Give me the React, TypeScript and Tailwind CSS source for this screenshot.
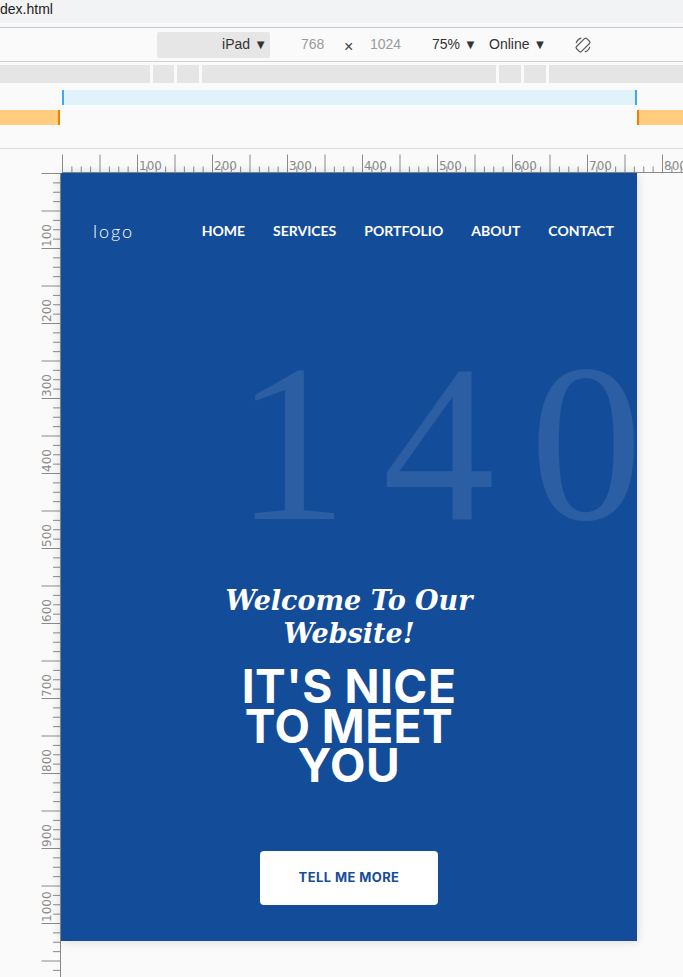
import React from 'react'

const navItems = ['Home', 'Services', 'Portfolio', 'About', 'Contact']

const TICK = 9.375

const HorizontalRuler: React.FC = () => {
  const ticks = Array.from({ length: 67 }, (_, i) => i)
  return (
    <svg width="683" height="24" className="block">
      <line x1="62" y1="23.5" x2="683" y2="23.5" stroke="#8a8a8a" strokeWidth="1" />
      {ticks.map(i => {
        const x = 62.5 + i * TICK
        const long = i % 4 === 0
        return (
          <g key={i}>
            <line x1={x} y1={long ? 5.5 : 17.5} x2={x} y2="24" stroke="#8a8a8a" strokeWidth="1" />
            {i % 8 === 0 && i > 0 && (
              <text x={x + 1.5} y="21" fontSize="12" fill="#8a8a8a" fontFamily="DejaVu Sans, sans-serif">{(i / 8) * 100}</text>
            )}
          </g>
        )
      })}
    </svg>
  )
}

const VerticalRuler: React.FC = () => {
  const ticks = Array.from({ length: 86 }, (_, i) => i)
  return (
    <svg width="61" height="804" className="block shrink-0">
      <line x1="60.5" y1="0" x2="60.5" y2="804" stroke="#8a8a8a" strokeWidth="1" />
      {ticks.map(i => {
        const y = 0.5 + i * TICK
        const long = i % 4 === 0
        return (
          <g key={i}>
            <line x1={long ? 41.5 : 53} y1={y} x2="61" y2={y} stroke="#8a8a8a" strokeWidth="1" />
            {i % 8 === 0 && i > 0 && (
              <text transform={`translate(51 ${y - 1.5}) rotate(-90)`} fontSize="12" fill="#8a8a8a" fontFamily="DejaVu Sans, sans-serif">{(i / 8) * 100}</text>
            )}
          </g>
        )
      })}
    </svg>
  )
}

const RotateIcon: React.FC = () => (
  <svg width="18" height="18" viewBox="0 0 18 18" fill="none" stroke="#5a5a5a" strokeWidth="1.2">
    <rect x="5.5" y="1.8" width="7" height="14.4" rx="1.6" transform="rotate(45 9 9)" />
    <path d="M2.2 7.2 A7.2 7.2 0 0 1 7.2 2.2" />
    <path d="M15.8 10.8 A7.2 7.2 0 0 1 10.8 15.8" />
  </svg>
)

const App: React.FC = () => {
  return (
    <div className="w-[683px] h-[977px] overflow-hidden bg-[#fafafa] font-['Liberation_Sans',sans-serif] text-[#333]">
      {/* tab strip */}
      <div className="h-[23px] bg-[#f1f3f4] text-[14px] leading-[19px] text-[#222]">dex.html</div>
      <div className="h-[5px] border-b border-[#c8c8c8]" />

      {/* device toolbar */}
      <div className="h-[34px] flex items-center border-b border-[#cfcfcf] text-[14px] whitespace-nowrap">
        <div className="ml-[157px] w-[113px] h-[26px] bg-[#e6e6e6] rounded-[2px] flex items-center justify-end pr-[3px] text-[#333]">
          iPad<span className="ml-[4px] text-[13px]">▼</span>
        </div>
        <span className="ml-[31px] w-[26px] text-[#9a9a9a]">768</span>
        <span className="ml-[17px] w-[10px] text-[#444] text-[16px] mt-[4px]">×</span>
        <span className="ml-[16px] w-[34px] text-[#9a9a9a]">1024</span>
        <span className="ml-[28px] w-[46px] text-[#333]">75%<span className="ml-[4px] text-[13px]">▼</span></span>
        <span className="ml-[11px] w-[60px] text-[#333]">Online<span className="ml-[4px] text-[13px]">▼</span></span>
        <span className="ml-[25px] w-[18px] flex"><RotateIcon /></span>
      </div>

      {/* media query bars */}
      <div className="mt-[3px] h-[18px] flex gap-[3px]">
        <div className="w-[150px] bg-[#e5e5e5]" />
        <div className="w-[21px] bg-[#e5e5e5]" />
        <div className="w-[22px] bg-[#e5e5e5]" />
        <div className="w-[294px] bg-[#e5e5e5]" />
        <div className="w-[22px] bg-[#e5e5e5]" />
        <div className="w-[22px] bg-[#e5e5e5]" />
        <div className="flex-1 bg-[#e5e5e5]" />
      </div>
      <div className="mt-[7px] h-[15px] flex">
        <div className="ml-[62px] w-[575px] bg-[#e0f3fb] border-x-[2px] border-[#42a5f5]" />
      </div>
      <div className="mt-[5px] h-[15px] flex">
        <div className="w-[60px] bg-[#ffcc80] border-r-[2px] border-[#f57c00]" />
        <div className="w-[577px]" />
        <div className="flex-1 bg-[#ffcc80] border-l-[2px] border-[#f57c00]" />
      </div>
      <div className="h-[24px] border-b border-[#dcdcdc]" />

      {/* rulers + device frame */}
      <HorizontalRuler />
      <div className="flex">
        <VerticalRuler />
        <div className="relative w-[576px] h-[768px] shrink-0 bg-[#134c98] overflow-hidden shadow-[0_0_10px_rgba(0,0,0,0.14)] text-white">
          <div aria-hidden className="absolute left-[174px] top-[158px] font-['Liberation_Serif',serif] text-[225px] leading-none tracking-[35px] text-white/10 whitespace-nowrap select-none">
            140
          </div>

          <nav className="relative h-[20px] mt-[48px] flex items-center justify-between pl-[32px] pr-[23px]">
            <span className="font-['Lato',sans-serif] text-[18px] font-light tracking-[2px] leading-[20px]">logo</span>
            <ul className="flex gap-[28px] font-['Lato',sans-serif] text-[14px] font-bold uppercase leading-[20px]">
              {navItems.map(item => (
                <li key={item} className="cursor-pointer">{item}</li>
              ))}
            </ul>
          </nav>

          <div className="relative flex flex-col items-center text-center">
            <h3 className="mt-[343px] font-['DejaVu_Serif',serif] italic font-bold text-[27px] leading-[33px]">
              Welcome To Our<br />Website!
            </h3>
            <h1 className="mt-[17px] font-['Inter',sans-serif] font-bold text-[46px] leading-[39.5px] tracking-[0.5px] uppercase">
              It's Nice<br />To Meet<br />You
            </h1>
            <a className="mt-[65px] w-[178px] h-[54px] rounded-[4px] bg-white flex items-center justify-center font-['Inter',sans-serif] font-bold text-[13px] tracking-[0.4px] uppercase text-[#174d97] cursor-pointer">
              Tell Me More
            </a>
          </div>
        </div>
      </div>
    </div>
  )
}

export default App
